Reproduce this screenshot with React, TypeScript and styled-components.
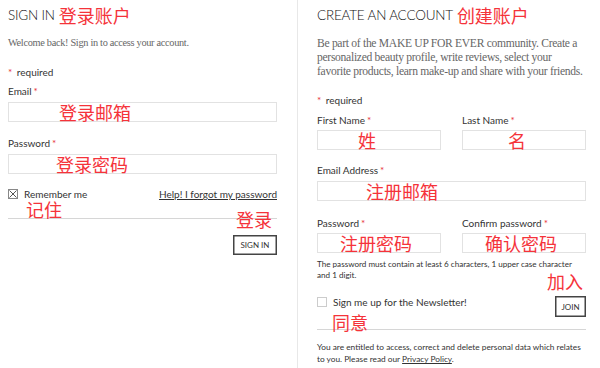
import React from "react";
import styled, { createGlobalStyle } from "styled-components";

const Global = createGlobalStyle`
  html, body { margin: 0; padding: 0; background: #fff; }
  body { width: 600px; height: 368px; overflow: hidden; }
`;

const SANS = `"Lato", "Open Sans", "Liberation Sans", sans-serif`;
const CJK = `"Noto Sans CJK SC", "Noto Sans", sans-serif`;

const Page = styled.div`
  display: flex;
  width: 600px;
  height: 368px;
  padding-left: 8px;
  box-sizing: border-box;
  font-family: ${SANS};
  color: #333;
`;

const Column = styled.section`
  position: relative;
  width: 269px;
  display: flex;
  flex-direction: column;
`;

const Divider = styled.div`
  width: 1px;
  background: #e8e8e8;
  margin: 0 19px 0 20px;
  align-self: stretch;
`;

const Heading = styled.h2`
  margin: 5px 0 0;
  height: 20px;
  display: flex;
  align-items: center;
  gap: 4px;
  font-family: ${SANS};
  font-weight: 300;
  font-size: 13.5px;
  letter-spacing: -0.2px;
  color: #111;
`;

const Red = styled.span<{ $size?: number }>`
  font-family: ${CJK};
  color: #f5333a;
  font-size: ${(p) => p.$size ?? 18}px;
  line-height: 1;
  font-weight: 400;
  letter-spacing: 0;
  white-space: nowrap;
`;

const Intro = styled.p<{ $mt: number; $size: number }>`
  margin: ${(p) => p.$mt}px 0 0;
  font-family: "Liberation Serif", serif;
  font-size: ${(p) => p.$size}px;
  letter-spacing: -0.3px;
  line-height: 14px;
  color: #666;
  white-space: nowrap;
`;

const Small = styled.div<{ $mt: number }>`
  margin-top: ${(p) => p.$mt}px;
  font-size: 10px;
  line-height: 12px;
  color: #333;
`;

const Star = styled.span<{ $lead?: boolean }>`
  color: #e8323a;
  margin: ${(p) => (p.$lead ? "0 2px 0 0" : "0 2px")};
`;

const Input = styled.div<{ $mt?: number; $pad: number }>`
  margin-top: ${(p) => p.$mt ?? 4}px;
  height: 20px;
  box-sizing: border-box;
  border: 1px solid #e2e2e2;
  display: flex;
  align-items: center;
  padding-left: ${(p) => p.$pad}px;
  overflow: visible;
`;

const Pair = styled.div<{ $mt: number }>`
  margin-top: ${(p) => p.$mt}px;
  display: grid;
  grid-template-columns: 124px 124px;
  column-gap: 21px;
`;

const Field = styled.div`
  display: flex;
  flex-direction: column;
`;

const CheckRow = styled.div<{ $mt: number }>`
  margin-top: ${(p) => p.$mt}px;
  display: flex;
  align-items: center;
  height: 12px;
  font-size: 10px;
`;

const Box = styled.span<{ $tone: string }>`
  width: 10px;
  height: 10px;
  box-sizing: border-box;
  border: 1px solid ${(p) => p.$tone};
  margin-right: 6px;
  display: inline-flex;
  align-items: center;
  justify-content: center;
`;

const HelpLink = styled.a`
  margin-left: auto;
  color: #333;
  text-decoration: underline;
  font-size: 10px;
`;

const Rule = styled.hr<{ $mt: number }>`
  margin: ${(p) => p.$mt}px 0 0;
  border: 0;
  border-top: 1px solid #d6d6d6;
  height: 0;
`;

const ButtonRow = styled.div<{ $mt: number }>`
  margin-top: ${(p) => p.$mt}px;
  display: flex;
  justify-content: flex-end;
`;

const Button = styled.button<{ $w: number; $h: number }>`
  width: ${(p) => p.$w}px;
  height: ${(p) => p.$h}px;
  border: 1px solid #444;
  box-shadow: inset 0 0 0 0.5px #444;
  background: #fff;
  font-family: ${SANS};
  font-size: 8px;
  color: #333;
  padding: 0;
`;

const Hint = styled.p<{ $mt: number }>`
  margin: ${(p) => p.$mt}px 0 0;
  font-size: 8.1px;
  line-height: 11px;
  color: #333;
`;

const Legal = styled.p<{ $mt: number }>`
  margin: ${(p) => p.$mt}px 0 0;
  font-size: 8.3px;
  line-height: 12px;
  color: #333;
  a { color: #333; text-decoration: underline; }
`;

const JoinRow = styled.div<{ $mt: number }>`
  margin-top: ${(p) => p.$mt}px;
  display: flex;
  align-items: flex-start;
  justify-content: space-between;
  font-size: 10px;
`;

const Note = styled(Red)<{ $x: number; $y: number }>`
  position: absolute;
  left: ${(p) => p.$x}px;
  top: ${(p) => p.$y}px;
`;

const Label = ({ text }: { text: string }) => (
  <>
    {text}
    <Star>*</Star>
  </>
);

export default function App() {
  return (
    <>
      <Global />
      <Page>
        <Column>
          <Heading>
            SIGN IN <Red>登录账户</Red>
          </Heading>
          <Intro $mt={11} $size={10.3}>
            Welcome back! Sign in to access your account.
          </Intro>
          <Small $mt={16}>
            <Star $lead>*</Star> required
          </Small>
          <Small $mt={7}>
            <Label text="Email" />
          </Small>
          <Input $mt={5} $pad={50}>
            <Red>登录邮箱</Red>
          </Input>
          <Small $mt={15}>
            <Label text="Password" />
          </Small>
          <Input $mt={5} $pad={47}>
            <Red>登录密码</Red>
          </Input>
          <CheckRow $mt={14}>
            <Box $tone="#888">
              <svg width="8" height="8" viewBox="0 0 8 8">
                <path d="M0.5 0.5 L7.5 7.5 M7.5 0.5 L0.5 7.5" stroke="#555" strokeWidth="1" />
              </svg>
            </Box>
            Remember me
            <HelpLink href="#">Help! I forgot my password</HelpLink>
          </CheckRow>
          <Rule $mt={18} />
          <ButtonRow $mt={16}>
            <Button $w={44} $h={20}>SIGN IN</Button>
          </ButtonRow>
          <Note $x={18} $y={200}>记住</Note>
          <Note $x={228} $y={210}>登录</Note>
        </Column>
        <Divider />
        <Column>
          <Heading>
            CREATE AN ACCOUNT <Red>创建账户</Red>
          </Heading>
          <Intro $mt={12} $size={11.6}>
            Be part of the MAKE UP FOR EVER community. Create a
            <br />
            personalized beauty profile, write reviews, select your
            <br />
            favorite products, learn make-up and share with your friends.
          </Intro>
          <Small $mt={15}>
            <Star $lead>*</Star> required
          </Small>
          <Pair $mt={8}>
            <Field>
              <Small $mt={0}>
                <Label text="First Name" />
              </Small>
              <Input $pad={40}>
                <Red>姓</Red>
              </Input>
            </Field>
            <Field>
              <Small $mt={0}>
                <Label text="Last Name" />
              </Small>
              <Input $pad={45}>
                <Red>名</Red>
              </Input>
            </Field>
          </Pair>
          <Small $mt={14}>
            <Label text="Email Address" />
          </Small>
          <Input $mt={5} $pad={48}>
            <Red>注册邮箱</Red>
          </Input>
          <Pair $mt={16}>
            <Field>
              <Small $mt={0}>
                <Label text="Password" />
              </Small>
              <Input $pad={22}>
                <Red>注册密码</Red>
              </Input>
            </Field>
            <Field>
              <Small $mt={0}>
                <Label text="Confirm password" />
              </Small>
              <Input $pad={22}>
                <Red>确认密码</Red>
              </Input>
            </Field>
          </Pair>
          <Hint $mt={6}>
            The password must contain at least 6 characters, 1 upper case character and 1 digit.
          </Hint>
          <JoinRow $mt={15}>
            <CheckRow $mt={0}>
              <Box $tone="#ccc" />
              Sign me up for the Newsletter!
            </CheckRow>
            <Button $w={31} $h={21}>JOIN</Button>
          </JoinRow>
          <Rule $mt={12} />
          <Legal $mt={11}>
            You are entitled to access, correct and delete personal data which relates to you.
            Please read our <a href="#">Privacy Policy</a>.
          </Legal>
          <Note $x={15} $y={313}>同意</Note>
          <Note $x={230} $y={272}>加入</Note>
        </Column>
      </Page>
    </>
  );
}
